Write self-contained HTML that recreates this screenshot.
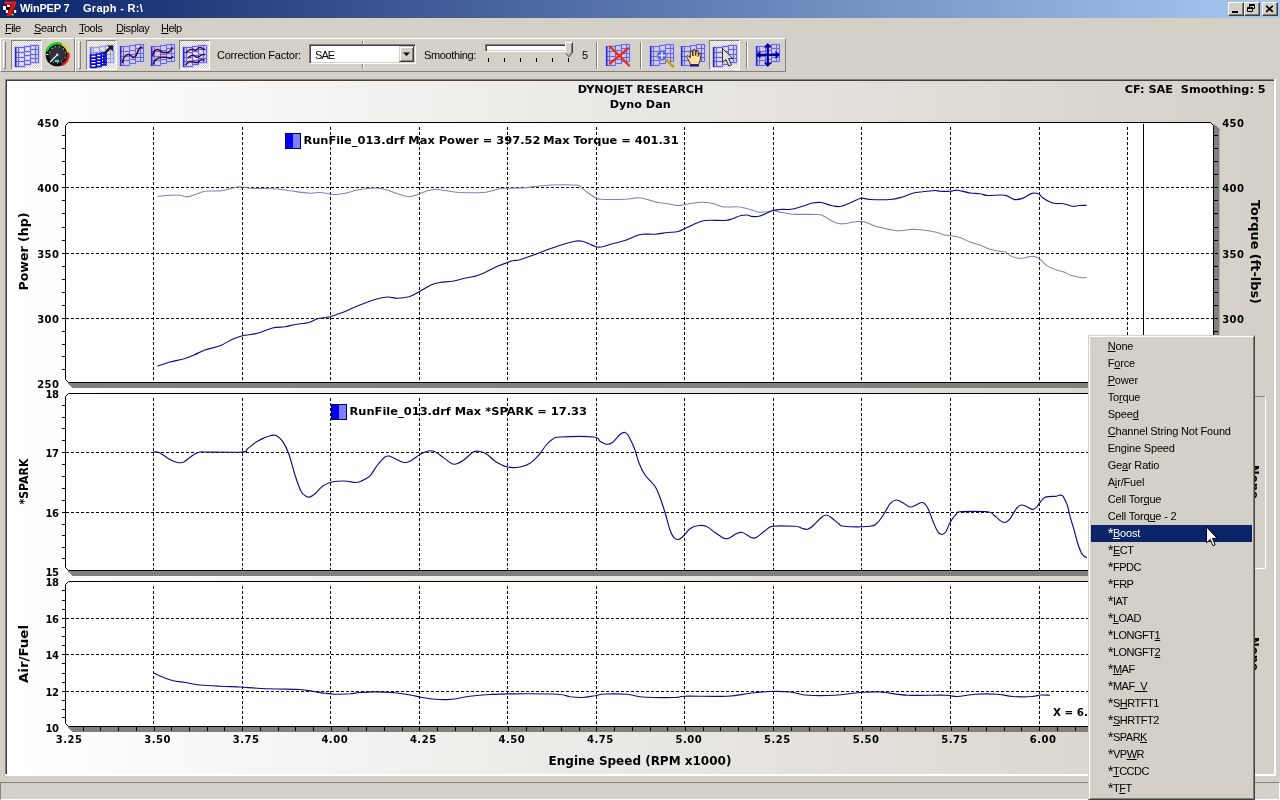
<!DOCTYPE html>
<html><head><meta charset="utf-8"><title>WinPEP 7 Graph</title>
<style>
html,body{margin:0;padding:0}
body{width:1280px;height:800px;overflow:hidden;background:#D4D0C8;position:relative;font-family:"Liberation Sans",sans-serif;font-size:11px;color:#000}
#root{position:absolute;left:0;top:0;width:1280px;height:800px}
.abs{position:absolute}
#g,#menubar span,.lbl,#ctx div,.gs{will-change:transform}
#title{left:0;top:0;width:1280px;height:18px;background:linear-gradient(90deg,#0A246A 0%,#A6CAF0 100%)}
#title span{will-change:transform;position:absolute;top:2px;color:#fff;font-weight:bold;font-size:11px;line-height:13px;white-space:pre}
.cb{position:absolute;top:2px;width:16px;height:14px;background:#D4D0C8;box-sizing:border-box;border:1px solid;border-color:#fff #404040 #404040 #fff;box-shadow:inset -1px -1px 0 #808080}
#menubar span{position:absolute;top:22px;line-height:13px;font-size:11px;white-space:pre}
u{text-decoration:underline;text-decoration-thickness:1px;text-underline-offset:1px}
.tb{position:absolute;top:38px;height:34px;box-sizing:border-box;border:1px solid;border-color:#fff #808080 #808080 #fff}
.grip{position:absolute;top:2px;width:3px;height:28px;box-sizing:border-box;border:1px solid;border-color:#fff #808080 #808080 #fff}
.sep{position:absolute;top:42px;width:2px;height:27px;box-sizing:border-box;border-left:1px solid #808080;border-right:1px solid #fff}
.chk{position:absolute;top:40px;width:31px;height:30px;box-sizing:border-box;border:1px solid;border-color:#808080 #fff #fff #808080;
 background-color:#fff;background-image:linear-gradient(45deg,#D4D0C8 25%,transparent 25%,transparent 75%,#D4D0C8 75%),linear-gradient(45deg,#D4D0C8 25%,transparent 25%,transparent 75%,#D4D0C8 75%);background-size:2px 2px;background-position:0 0,1px 1px}
.lbl{position:absolute;top:49px;line-height:13px;white-space:pre}
#status{left:0;top:782px;width:1280px;height:18px;box-sizing:border-box;border:1px solid;border-color:#808080 #fff #fff #808080}
#ctx{left:1088px;top:335px;width:167px;height:465px;box-sizing:border-box;background:#D4D0C8;border:1px solid;border-color:#D4D0C8 #404040 #404040 #D4D0C8;box-shadow:inset 1px 1px 0 #fff,inset -1px -1px 0 #808080}
#ctx div{position:absolute;left:2px;width:161px;height:17px;line-height:17px;padding-left:16.7px;box-sizing:border-box;white-space:pre;letter-spacing:-0.17px}
#ctx div.sel{background:#0A246A;color:#fff}
#ctx div.st{letter-spacing:-0.5px}
#ctx i{font-style:normal;font-size:15px;line-height:0;position:relative;top:1.4px;letter-spacing:-0.6px}
</style></head>
<body>
<div id="root">
<div id="title" class="abs">
<svg class="abs" style="left:0;top:0" width="20" height="18" viewBox="0 0 20 18"><path d="M2.5 5.5h4v-1.5h4v3h3.5v3h2v3.5h-3v2.5h-3v-2.5h-2.5v-0.5h-3v-3h-2z" fill="#0a0a14"/><rect x="3" y="6" width="3" height="4" fill="#fff"/><rect x="7" y="4.6" width="3" height="2.4" fill="#fff"/><rect x="5.8" y="10" width="2.4" height="3" fill="#fff"/><rect x="14" y="10" width="2.2" height="3" fill="#fff"/><rect x="11.6" y="13.6" width="1.8" height="1.8" fill="#fff"/><path d="M4.2 1.4 H16 V4.4 L10.8 16 H6.3 L11.6 4.6 H4.6 Z" fill="#D81414"/><path d="M5 2.4H15" stroke="#F03020" stroke-width="1"/></svg>
<span style="left:20px;letter-spacing:-0.2px">WinPEP 7</span><span style="left:83px;letter-spacing:0.3px">Graph - R:\</span>
<div class="cb" style="left:1228px"><svg width="14" height="12" style="position:absolute;left:0;top:0"><rect x="3" y="8" width="6" height="2" fill="#000"/></svg></div>
<div class="cb" style="left:1244px"><svg width="14" height="12" style="position:absolute;left:0;top:0"><path d="M4.5 1.5h5v4h-5z M4.5 2.5h5" fill="none" stroke="#000"/><path d="M2.5 4.5h5v4h-5z" fill="#D4D0C8" stroke="#000"/><path d="M2.5 5.5h5" stroke="#000"/></svg></div>
<div class="cb" style="left:1262px"><svg width="14" height="12" style="position:absolute;left:0;top:0"><path d="M3.2 2.8 L9.8 8.8 M9.8 2.8 L3.2 8.8" stroke="#000" stroke-width="1.7"/></svg></div>
</div>
<div id="menubar">
<span style="left:5.4px;letter-spacing:-0.55px"><u>F</u>ile</span>
<span style="left:34.0px;letter-spacing:-0.40px"><u>S</u>earch</span>
<span style="left:79.0px;letter-spacing:-0.50px"><u>T</u>ools</span>
<span style="left:116.0px;letter-spacing:-0.40px"><u>D</u>isplay</span>
<span style="left:161.0px;letter-spacing:-0.50px"><u>H</u>elp</span>
</div>
<div class="tb" style="left:0;width:75px"><div class="grip" style="left:2px"></div></div>
<div class="tb" style="left:75px;width:711px"><div class="grip" style="left:2px"></div></div>
<div class="chk" style="left:11px"></div>
<div class="chk" style="left:86px"></div>
<div class="chk" style="left:179px"></div>
<div class="chk" style="left:709px"></div>
<div class="sep" style="left:596px"></div>
<div class="sep" style="left:640px"></div>
<div class="sep" style="left:746px"></div>
<div class="sep" style="left:362px;top:41px;height:28px"></div>
<span class="lbl" style="left:216.5px;letter-spacing:-0.23px">Correction Factor:</span>
<span class="lbl" style="left:423.5px;letter-spacing:-0.37px">Smoothing:</span>
<span class="lbl" style="left:581.5px">5</span>
<div class="abs" style="left:309px;top:44px;width:107px;height:20px;box-sizing:border-box;background:#fff;border:1px solid;border-color:#808080 #fff #fff #808080;box-shadow:inset 1px 1px 0 #404040,inset -1px -1px 0 #D4D0C8"><span class="abs gs" style="left:5px;top:4px;line-height:13px;letter-spacing:-0.9px">SAE</span><div class="abs" style="left:89px;top:1px;width:15px;height:16px;box-sizing:border-box;background:#D4D0C8;border:1px solid;border-color:#D4D0C8 #404040 #404040 #D4D0C8;box-shadow:inset 1px 1px 0 #fff,inset -1px -1px 0 #808080"><svg width="13" height="14" class="abs" style="left:0;top:0"><path d="M3 5.5h7l-3.5 3.5z" fill="#000"/></svg></div></div>
<div class="abs" style="left:485px;top:44px;width:88px;height:8px;box-sizing:border-box;background:#fff;border:1px solid;border-color:#808080 #fff #fff #808080;box-shadow:inset 1px 1px 0 #404040,inset -1px -1px 0 #D4D0C8"></div>
<svg class="abs" style="left:560px;top:40px" width="20" height="24"><path d="M5.5 2.5 H12.5 V12.5 L9 16.5 L5.5 12.5 Z" fill="#D4D0C8"/><path d="M5.5 12.5 V2.5 H12" fill="none" stroke="#fff"/><path d="M12.5 2.5 V12.5 L9 16.8 L5.5 12.8" fill="none" stroke="#404040"/><path d="M11.5 3.5 V12.2 L9 15.3" fill="none" stroke="#808080"/></svg>
<div class="abs" style="left:488px;top:58px;width:1px;height:4px;background:#000"></div>
<div class="abs" style="left:504px;top:58px;width:1px;height:4px;background:#000"></div>
<div class="abs" style="left:520px;top:58px;width:1px;height:4px;background:#000"></div>
<div class="abs" style="left:536px;top:58px;width:1px;height:4px;background:#000"></div>
<div class="abs" style="left:552px;top:58px;width:1px;height:4px;background:#000"></div>
<div class="abs" style="left:568px;top:58px;width:1px;height:4px;background:#000"></div>
<svg class="abs" style="left:0;top:38px" width="800" height="36" viewBox="0 38 800 36">
<defs><symbol id="gr" viewBox="0 0 25 24" overflow="visible">
<path d="M0.5 2.5H3.5V21.5H0.5ZM0.5 7.5H3.5M0.5 12.5H3.5M0.5 16.5H3.5M3.5 2.5H9.5V21.5H3.5ZM3.5 7.5H9.5M3.5 12.5H9.5M3.5 16.5H9.5M9.5 1.5H15.5V19.5H9.5ZM9.5 6.5H15.5M9.5 10.5H15.5M9.5 15.5H15.5M15.5 0.5H20.5V17.5H15.5ZM15.5 4.5H20.5M15.5 9.5H20.5M15.5 13.5H20.5M20.5 0.5H23.5V17.5H20.5ZM20.5 4.5H23.5M20.5 9.5H23.5M20.5 13.5H23.5" fill="none" stroke="#C6C6FC" stroke-width="2.8" stroke-linejoin="round" opacity=".85"/>
<path d="M0.5 2.5H3.5V21.5H0.5ZM0.5 7.5H3.5M0.5 12.5H3.5M0.5 16.5H3.5M3.5 2.5H9.5V21.5H3.5ZM3.5 7.5H9.5M3.5 12.5H9.5M3.5 16.5H9.5M9.5 1.5H15.5V19.5H9.5ZM9.5 6.5H15.5M9.5 10.5H15.5M9.5 15.5H15.5M15.5 0.5H20.5V17.5H15.5ZM15.5 4.5H20.5M15.5 9.5H20.5M15.5 13.5H20.5M20.5 0.5H23.5V17.5H20.5ZM20.5 4.5H23.5M20.5 9.5H23.5M20.5 13.5H23.5" fill="none" stroke="#6666E4" stroke-width="1"/>
<line x1="0.7" x2="0.7" y1="2.2" y2="22" stroke="#2626CC" stroke-width="1.6"/>
</symbol></defs>
<use href="#gr" x="15.0" y="45.0" width="25" height="24"/>
<circle cx="57.2" cy="54.7" r="11.6" fill="#0c0c10"/>
<circle cx="57.6" cy="54.4" r="8.6" fill="#30303c"/>
<path d="M46.6 51 A11.2 11.2 0 0 1 61.5 44.2" fill="none" stroke="#18D418" stroke-width="2.4"/>
<path d="M61.5 44.2 A11.2 11.2 0 0 1 68.2 52.5" fill="none" stroke="#E6DC20" stroke-width="2.2"/>
<path d="M68.4 53.5 A11.2 11.2 0 0 1 62.2 64.8" fill="none" stroke="#E01C0C" stroke-width="2.6"/>
<circle cx="49.6" cy="52.0" r=".55" fill="#e8e8f0"/>
<circle cx="52.1" cy="48.4" r=".55" fill="#e8e8f0"/>
<circle cx="55.3" cy="46.8" r=".55" fill="#e8e8f0"/>
<circle cx="59.5" cy="46.8" r=".55" fill="#e8e8f0"/>
<circle cx="63.3" cy="48.9" r=".55" fill="#e8e8f0"/>
<circle cx="65.4" cy="52.7" r=".55" fill="#e8e8f0"/>
<circle cx="65.2" cy="57.6" r=".55" fill="#e8e8f0"/>
<circle cx="61.5" cy="62.0" r=".55" fill="#e8e8f0"/>
<circle cx="57.4" cy="63.1" r=".55" fill="#e8e8f0"/>
<circle cx="53.2" cy="62.0" r=".55" fill="#e8e8f0"/>
<rect x="46" y="54" width="2.6" height="1" fill="#d8d8d8"/>
<line x1="57.2" y1="54.8" x2="50.2" y2="62" stroke="#fff" stroke-width="1.1"/>
<circle cx="57.2" cy="54.7" r="1.2" fill="#f0d8d8"/>
<rect x="55" y="59.9" width="4" height="2.1" fill="#28E8C8"/>
<g opacity=".6">
<use href="#gr" x="90.0" y="45.0" width="25" height="24"/>
</g>
<path d="M90.6 55.0H96.3V67.3H90.6ZM90.6 58.1H96.3M90.6 61.1H96.3M90.6 64.2H96.3M96.3 54.0H101.2V66.3H96.3ZM96.3 57.1H101.2M96.3 60.1H101.2M96.3 63.2H101.2M101.2 53.2H106.0V64.8H101.2ZM101.2 56.1H106.0M101.2 59.0H106.0M101.2 61.9H106.0M104.0 53.2V64.8" fill="#fff" stroke="#0A0AD4" stroke-width="1.7"/>
<path d="M104.5 53.5 L110.5 47.5" stroke="#181818" stroke-width="2.4"/><path d="M107 45.6 H113 V51.6 Z" fill="#202024"/>
<use href="#gr" x="120.0" y="44.0" width="25" height="24"/>
<path d="M122.5 63 C123 57 126 54.5 128.5 54.5 S132 58 134 57.5 S137 54 138 51 S140.5 47.2 142.5 47.2" fill="none" stroke="#380038" stroke-width="1.6"/>
<use href="#gr" x="151.0" y="44.0" width="25" height="24"/>
<path d="M152.6 56 C153.5 51 156 49.3 158 49.5 S160.5 52.3 163 52.5 H167 C169.5 52.3 171 50.5 172.6 47.3" fill="none" stroke="#400030" stroke-width="1.5"/>
<path d="M153 64.5 C154 61 157 58 161 57.2 H166 C168 57.5 170 59 171 58.2 L172.8 56.3" fill="none" stroke="#400030" stroke-width="1.5"/>
<use href="#gr" x="183.0" y="45.0" width="25" height="24"/>
<path d="M185.5 53 L188 51 L190 49.6 L193 49.2 L195 50.4 L197 49.5 L199 47.6 L201 47.5 L203 49 L205 49.5" fill="none" stroke="#3C0040" stroke-width="1.4" stroke-linejoin="round"/>
<path d="M188 58.2 L190 56.2 L193 55.2 L196 57 L198 57.4 L200 56 L202 54.6 L205 54.5" fill="none" stroke="#3C0040" stroke-width="1.4" stroke-linejoin="round"/>
<path d="M185.5 65 L187 63.5 L189 62 L192 61.5 L195 62.5 L198 62.5 L200 60.2 L203 59.6 L204.6 60.6" fill="none" stroke="#3C0040" stroke-width="1.4" stroke-linejoin="round"/>
<use href="#gr" x="606.0" y="44.0" width="25" height="24"/>
<path d="M610 46.5 L629 65.5 M628 48.5 L610 63.5" stroke="#E83018" stroke-width="2.4" stroke-linecap="round"/>
<use href="#gr" x="650.0" y="44.0" width="25" height="24"/>
<circle cx="662" cy="55.5" r="5" fill="#5060E8" stroke="#9098C8" stroke-width="1"/><path d="M662 52v7M658.5 55.5h7" stroke="#e8e8ff" stroke-width="1.6"/>
<path d="M666.5 60 L673 66.5" stroke="#C8A010" stroke-width="2.6" stroke-linecap="round"/>
<use href="#gr" x="681.0" y="44.0" width="25" height="24"/>
<path d="M690 66.5 h9 v-2 h-9z" fill="#1010B0"/>
<path d="M690.5 64.5 L688 59 L686.5 56.5 L688 55.5 L690.3 58 V51.5 L692 50.8 L693 56 V49.8 L695 49.5 L695.6 55.5 L696.4 50.5 L698.2 50.8 L698.2 56.5 L699.6 53 L701.2 53.6 L700.2 60 L698.6 64.5 Z" fill="#FFE0A0" stroke="#302010" stroke-width=".9"/>
<use href="#gr" x="713.0" y="45.0" width="25" height="24"/>
<path d="M722.5 48.5 V62.5 L726 59.5 L728.8 66 L731.5 64.8 L728.6 58.6 H733 Z" fill="#E0E0E0" stroke="#303030" stroke-width="1"/>
<use href="#gr" x="756.0" y="44.0" width="25" height="24"/>
<path d="M759 54.8 H777 M767.8 46 V64" stroke="#000098" stroke-width="2.2"/>
<path d="M756 54.8 l4.5 -4 v8z M780 54.8 l-4.5 -4 v8z M767.8 43 l-4 4.5 h8z M767.8 67 l-4 -4.5 h8z" fill="#000098"/>
</svg>
<svg id="g" width="1280" height="800" viewBox="0 0 1280 800" style="position:absolute;left:0;top:0" font-family="'DejaVu Sans','Liberation Sans',sans-serif" font-weight="bold" fill="#000">
<defs><linearGradient id="pg" x1="0" x2="1" y1="0" y2="0"><stop offset="0" stop-color="#fff"/><stop offset="1" stop-color="#D4D0C8"/></linearGradient></defs>
<rect x="5" y="79" width="1271" height="697" fill="#fff"/>
<rect x="5" y="79" width="1269" height="695" fill="#808080"/>
<rect x="6" y="80" width="1268" height="694" fill="#404040"/>
<rect x="7" y="81" width="1267" height="693" fill="url(#pg)"/>
<text x="577.7" y="92.8" font-size="11" text-anchor="start" textLength="125.7" lengthAdjust="spacingAndGlyphs">DYNOJET RESEARCH</text>
<text x="609.7" y="107.8" font-size="11" text-anchor="start" textLength="61.0" lengthAdjust="spacingAndGlyphs">Dyno Dan</text>
<text x="1124.7" y="92.7" font-size="11" text-anchor="start" textLength="141.0" lengthAdjust="spacingAndGlyphs" xml:space="preserve">CF: SAE&#160; Smoothing: 5</text>
<path d="M67.5 383.0 H1214 V124.0 L1219.5 128.5 V388.0 H72.5 Z" fill="#808080"/>
<path d="M68.5 122.5 H1210.5 L1213.5 125.5 V382.5 L1213.5 382.5 H68.5 L65.5 379.5 V125.5 Z" fill="#fff" stroke="#000" stroke-width="1"/>
<line x1="66" x2="1213" y1="187.5" y2="187.5" stroke="#000" stroke-dasharray="3 2" shape-rendering="crispEdges"/>
<line x1="66" x2="1213" y1="253.5" y2="253.5" stroke="#000" stroke-dasharray="3 2" shape-rendering="crispEdges"/>
<line x1="66" x2="1213" y1="318.5" y2="318.5" stroke="#000" stroke-dasharray="3 2" shape-rendering="crispEdges"/>
<line x1="153.5" x2="153.5" y1="126.5" y2="381.5" stroke="#000" stroke-dasharray="3 2" shape-rendering="crispEdges"/>
<line x1="242.1" x2="242.1" y1="126.5" y2="381.5" stroke="#000" stroke-dasharray="3 2" shape-rendering="crispEdges"/>
<line x1="330.6" x2="330.6" y1="126.5" y2="381.5" stroke="#000" stroke-dasharray="3 2" shape-rendering="crispEdges"/>
<line x1="419.2" x2="419.2" y1="126.5" y2="381.5" stroke="#000" stroke-dasharray="3 2" shape-rendering="crispEdges"/>
<line x1="507.7" x2="507.7" y1="126.5" y2="381.5" stroke="#000" stroke-dasharray="3 2" shape-rendering="crispEdges"/>
<line x1="596.3" x2="596.3" y1="126.5" y2="381.5" stroke="#000" stroke-dasharray="3 2" shape-rendering="crispEdges"/>
<line x1="684.8" x2="684.8" y1="126.5" y2="381.5" stroke="#000" stroke-dasharray="3 2" shape-rendering="crispEdges"/>
<line x1="773.4" x2="773.4" y1="126.5" y2="381.5" stroke="#000" stroke-dasharray="3 2" shape-rendering="crispEdges"/>
<line x1="861.9" x2="861.9" y1="126.5" y2="381.5" stroke="#000" stroke-dasharray="3 2" shape-rendering="crispEdges"/>
<line x1="950.5" x2="950.5" y1="126.5" y2="381.5" stroke="#000" stroke-dasharray="3 2" shape-rendering="crispEdges"/>
<line x1="1039.1" x2="1039.1" y1="126.5" y2="381.5" stroke="#000" stroke-dasharray="3 2" shape-rendering="crispEdges"/>
<line x1="1127.6" x2="1127.6" y1="126.5" y2="381.5" stroke="#000" stroke-dasharray="3 2" shape-rendering="crispEdges"/>
<line x1="1143.5" x2="1143.5" y1="123.5" y2="382.5" stroke="#000" shape-rendering="crispEdges"/>
<line x1="62" x2="65" y1="135.5" y2="135.5" stroke="#000" shape-rendering="crispEdges"/>
<line x1="1214" x2="1218" y1="135.5" y2="135.5" stroke="#000" shape-rendering="crispEdges"/>
<line x1="62" x2="65" y1="148.5" y2="148.5" stroke="#000" shape-rendering="crispEdges"/>
<line x1="1214" x2="1218" y1="148.5" y2="148.5" stroke="#000" shape-rendering="crispEdges"/>
<line x1="62" x2="65" y1="161.5" y2="161.5" stroke="#000" shape-rendering="crispEdges"/>
<line x1="1214" x2="1218" y1="161.5" y2="161.5" stroke="#000" shape-rendering="crispEdges"/>
<line x1="62" x2="65" y1="174.5" y2="174.5" stroke="#000" shape-rendering="crispEdges"/>
<line x1="1214" x2="1218" y1="174.5" y2="174.5" stroke="#000" shape-rendering="crispEdges"/>
<line x1="62" x2="65" y1="187.5" y2="187.5" stroke="#000" shape-rendering="crispEdges"/>
<line x1="1214" x2="1218" y1="187.5" y2="187.5" stroke="#000" shape-rendering="crispEdges"/>
<line x1="62" x2="65" y1="200.7" y2="200.7" stroke="#000" shape-rendering="crispEdges"/>
<line x1="1214" x2="1218" y1="200.7" y2="200.7" stroke="#000" shape-rendering="crispEdges"/>
<line x1="62" x2="65" y1="213.9" y2="213.9" stroke="#000" shape-rendering="crispEdges"/>
<line x1="1214" x2="1218" y1="213.9" y2="213.9" stroke="#000" shape-rendering="crispEdges"/>
<line x1="62" x2="65" y1="227.1" y2="227.1" stroke="#000" shape-rendering="crispEdges"/>
<line x1="1214" x2="1218" y1="227.1" y2="227.1" stroke="#000" shape-rendering="crispEdges"/>
<line x1="62" x2="65" y1="240.3" y2="240.3" stroke="#000" shape-rendering="crispEdges"/>
<line x1="1214" x2="1218" y1="240.3" y2="240.3" stroke="#000" shape-rendering="crispEdges"/>
<line x1="62" x2="65" y1="253.5" y2="253.5" stroke="#000" shape-rendering="crispEdges"/>
<line x1="1214" x2="1218" y1="253.5" y2="253.5" stroke="#000" shape-rendering="crispEdges"/>
<line x1="62" x2="65" y1="266.5" y2="266.5" stroke="#000" shape-rendering="crispEdges"/>
<line x1="1214" x2="1218" y1="266.5" y2="266.5" stroke="#000" shape-rendering="crispEdges"/>
<line x1="62" x2="65" y1="279.5" y2="279.5" stroke="#000" shape-rendering="crispEdges"/>
<line x1="1214" x2="1218" y1="279.5" y2="279.5" stroke="#000" shape-rendering="crispEdges"/>
<line x1="62" x2="65" y1="292.5" y2="292.5" stroke="#000" shape-rendering="crispEdges"/>
<line x1="1214" x2="1218" y1="292.5" y2="292.5" stroke="#000" shape-rendering="crispEdges"/>
<line x1="62" x2="65" y1="305.5" y2="305.5" stroke="#000" shape-rendering="crispEdges"/>
<line x1="1214" x2="1218" y1="305.5" y2="305.5" stroke="#000" shape-rendering="crispEdges"/>
<line x1="62" x2="65" y1="318.5" y2="318.5" stroke="#000" shape-rendering="crispEdges"/>
<line x1="1214" x2="1218" y1="318.5" y2="318.5" stroke="#000" shape-rendering="crispEdges"/>
<line x1="62" x2="65" y1="331.3" y2="331.3" stroke="#000" shape-rendering="crispEdges"/>
<line x1="1214" x2="1218" y1="331.3" y2="331.3" stroke="#000" shape-rendering="crispEdges"/>
<line x1="62" x2="65" y1="344.1" y2="344.1" stroke="#000" shape-rendering="crispEdges"/>
<line x1="1214" x2="1218" y1="344.1" y2="344.1" stroke="#000" shape-rendering="crispEdges"/>
<line x1="62" x2="65" y1="356.9" y2="356.9" stroke="#000" shape-rendering="crispEdges"/>
<line x1="1214" x2="1218" y1="356.9" y2="356.9" stroke="#000" shape-rendering="crispEdges"/>
<line x1="62" x2="65" y1="369.7" y2="369.7" stroke="#000" shape-rendering="crispEdges"/>
<line x1="1214" x2="1218" y1="369.7" y2="369.7" stroke="#000" shape-rendering="crispEdges"/>
<text x="37.3" y="127.4" font-size="10" textLength="21.6" lengthAdjust="spacing">450</text>
<text x="37.3" y="191.9" font-size="10" textLength="21.6" lengthAdjust="spacing">400</text>
<text x="37.3" y="257.9" font-size="10" textLength="21.6" lengthAdjust="spacing">350</text>
<text x="37.3" y="322.9" font-size="10" textLength="21.6" lengthAdjust="spacing">300</text>
<text x="37.3" y="388.4" font-size="10" textLength="21.6" lengthAdjust="spacing">250</text>
<text x="1222.3" y="127.4" font-size="10" textLength="21.6" lengthAdjust="spacing">450</text>
<text x="1222.3" y="191.9" font-size="10" textLength="21.6" lengthAdjust="spacing">400</text>
<text x="1222.3" y="257.9" font-size="10" textLength="21.6" lengthAdjust="spacing">350</text>
<text x="1222.3" y="322.9" font-size="10" textLength="21.6" lengthAdjust="spacing">300</text>
<path d="M67.5 571.0 H1214 V395.0 L1219.5 399.5 V576.0 H72.5 Z" fill="#808080"/>
<path d="M68.5 393.5 H1210.5 L1213.5 396.5 V570.5 L1213.5 570.5 H68.5 L65.5 567.5 V396.5 Z" fill="#fff" stroke="#000" stroke-width="1"/>
<line x1="66" x2="1213" y1="452.5" y2="452.5" stroke="#000" stroke-dasharray="3 2" shape-rendering="crispEdges"/>
<line x1="66" x2="1213" y1="512.5" y2="512.5" stroke="#000" stroke-dasharray="3 2" shape-rendering="crispEdges"/>
<line x1="153.5" x2="153.5" y1="397.5" y2="569.5" stroke="#000" stroke-dasharray="3 2" shape-rendering="crispEdges"/>
<line x1="242.1" x2="242.1" y1="397.5" y2="569.5" stroke="#000" stroke-dasharray="3 2" shape-rendering="crispEdges"/>
<line x1="330.6" x2="330.6" y1="397.5" y2="569.5" stroke="#000" stroke-dasharray="3 2" shape-rendering="crispEdges"/>
<line x1="419.2" x2="419.2" y1="397.5" y2="569.5" stroke="#000" stroke-dasharray="3 2" shape-rendering="crispEdges"/>
<line x1="507.7" x2="507.7" y1="397.5" y2="569.5" stroke="#000" stroke-dasharray="3 2" shape-rendering="crispEdges"/>
<line x1="596.3" x2="596.3" y1="397.5" y2="569.5" stroke="#000" stroke-dasharray="3 2" shape-rendering="crispEdges"/>
<line x1="684.8" x2="684.8" y1="397.5" y2="569.5" stroke="#000" stroke-dasharray="3 2" shape-rendering="crispEdges"/>
<line x1="773.4" x2="773.4" y1="397.5" y2="569.5" stroke="#000" stroke-dasharray="3 2" shape-rendering="crispEdges"/>
<line x1="861.9" x2="861.9" y1="397.5" y2="569.5" stroke="#000" stroke-dasharray="3 2" shape-rendering="crispEdges"/>
<line x1="950.5" x2="950.5" y1="397.5" y2="569.5" stroke="#000" stroke-dasharray="3 2" shape-rendering="crispEdges"/>
<line x1="1039.1" x2="1039.1" y1="397.5" y2="569.5" stroke="#000" stroke-dasharray="3 2" shape-rendering="crispEdges"/>
<line x1="1127.6" x2="1127.6" y1="397.5" y2="569.5" stroke="#000" stroke-dasharray="3 2" shape-rendering="crispEdges"/>
<line x1="1143.5" x2="1143.5" y1="394.5" y2="570.5" stroke="#000" shape-rendering="crispEdges"/>
<line x1="62" x2="65" y1="405.3" y2="405.3" stroke="#000" shape-rendering="crispEdges"/>
<line x1="1214" x2="1218" y1="405.3" y2="405.3" stroke="#000" shape-rendering="crispEdges"/>
<line x1="62" x2="65" y1="417.1" y2="417.1" stroke="#000" shape-rendering="crispEdges"/>
<line x1="1214" x2="1218" y1="417.1" y2="417.1" stroke="#000" shape-rendering="crispEdges"/>
<line x1="62" x2="65" y1="428.9" y2="428.9" stroke="#000" shape-rendering="crispEdges"/>
<line x1="1214" x2="1218" y1="428.9" y2="428.9" stroke="#000" shape-rendering="crispEdges"/>
<line x1="62" x2="65" y1="440.7" y2="440.7" stroke="#000" shape-rendering="crispEdges"/>
<line x1="1214" x2="1218" y1="440.7" y2="440.7" stroke="#000" shape-rendering="crispEdges"/>
<line x1="62" x2="65" y1="452.5" y2="452.5" stroke="#000" shape-rendering="crispEdges"/>
<line x1="1214" x2="1218" y1="452.5" y2="452.5" stroke="#000" shape-rendering="crispEdges"/>
<line x1="62" x2="65" y1="464.5" y2="464.5" stroke="#000" shape-rendering="crispEdges"/>
<line x1="1214" x2="1218" y1="464.5" y2="464.5" stroke="#000" shape-rendering="crispEdges"/>
<line x1="62" x2="65" y1="476.5" y2="476.5" stroke="#000" shape-rendering="crispEdges"/>
<line x1="1214" x2="1218" y1="476.5" y2="476.5" stroke="#000" shape-rendering="crispEdges"/>
<line x1="62" x2="65" y1="488.5" y2="488.5" stroke="#000" shape-rendering="crispEdges"/>
<line x1="1214" x2="1218" y1="488.5" y2="488.5" stroke="#000" shape-rendering="crispEdges"/>
<line x1="62" x2="65" y1="500.5" y2="500.5" stroke="#000" shape-rendering="crispEdges"/>
<line x1="1214" x2="1218" y1="500.5" y2="500.5" stroke="#000" shape-rendering="crispEdges"/>
<line x1="62" x2="65" y1="512.5" y2="512.5" stroke="#000" shape-rendering="crispEdges"/>
<line x1="1214" x2="1218" y1="512.5" y2="512.5" stroke="#000" shape-rendering="crispEdges"/>
<line x1="62" x2="65" y1="524.1" y2="524.1" stroke="#000" shape-rendering="crispEdges"/>
<line x1="1214" x2="1218" y1="524.1" y2="524.1" stroke="#000" shape-rendering="crispEdges"/>
<line x1="62" x2="65" y1="535.7" y2="535.7" stroke="#000" shape-rendering="crispEdges"/>
<line x1="1214" x2="1218" y1="535.7" y2="535.7" stroke="#000" shape-rendering="crispEdges"/>
<line x1="62" x2="65" y1="547.3" y2="547.3" stroke="#000" shape-rendering="crispEdges"/>
<line x1="1214" x2="1218" y1="547.3" y2="547.3" stroke="#000" shape-rendering="crispEdges"/>
<line x1="62" x2="65" y1="558.9" y2="558.9" stroke="#000" shape-rendering="crispEdges"/>
<line x1="1214" x2="1218" y1="558.9" y2="558.9" stroke="#000" shape-rendering="crispEdges"/>
<text x="45.5" y="398.2" font-size="10" textLength="13.4" lengthAdjust="spacing">18</text>
<text x="45.5" y="456.9" font-size="10" textLength="13.4" lengthAdjust="spacing">17</text>
<text x="45.5" y="516.9" font-size="10" textLength="13.4" lengthAdjust="spacing">16</text>
<text x="45.5" y="576.4" font-size="10" textLength="13.4" lengthAdjust="spacing">15</text>
<path d="M67.5 727.0 H1214 V583.0 L1219.5 587.5 V732.0 H72.5 Z" fill="#808080"/>
<path d="M68.5 581.5 H1210.5 L1213.5 584.5 V726.5 L1213.5 726.5 H68.5 L65.5 723.5 V584.5 Z" fill="#fff" stroke="#000" stroke-width="1"/>
<line x1="66" x2="1213" y1="618.5" y2="618.5" stroke="#000" stroke-dasharray="3 2" shape-rendering="crispEdges"/>
<line x1="66" x2="1213" y1="654.5" y2="654.5" stroke="#000" stroke-dasharray="3 2" shape-rendering="crispEdges"/>
<line x1="66" x2="1213" y1="691.5" y2="691.5" stroke="#000" stroke-dasharray="3 2" shape-rendering="crispEdges"/>
<line x1="153.5" x2="153.5" y1="585.5" y2="725.5" stroke="#000" stroke-dasharray="3 2" shape-rendering="crispEdges"/>
<line x1="242.1" x2="242.1" y1="585.5" y2="725.5" stroke="#000" stroke-dasharray="3 2" shape-rendering="crispEdges"/>
<line x1="330.6" x2="330.6" y1="585.5" y2="725.5" stroke="#000" stroke-dasharray="3 2" shape-rendering="crispEdges"/>
<line x1="419.2" x2="419.2" y1="585.5" y2="725.5" stroke="#000" stroke-dasharray="3 2" shape-rendering="crispEdges"/>
<line x1="507.7" x2="507.7" y1="585.5" y2="725.5" stroke="#000" stroke-dasharray="3 2" shape-rendering="crispEdges"/>
<line x1="596.3" x2="596.3" y1="585.5" y2="725.5" stroke="#000" stroke-dasharray="3 2" shape-rendering="crispEdges"/>
<line x1="684.8" x2="684.8" y1="585.5" y2="725.5" stroke="#000" stroke-dasharray="3 2" shape-rendering="crispEdges"/>
<line x1="773.4" x2="773.4" y1="585.5" y2="725.5" stroke="#000" stroke-dasharray="3 2" shape-rendering="crispEdges"/>
<line x1="861.9" x2="861.9" y1="585.5" y2="725.5" stroke="#000" stroke-dasharray="3 2" shape-rendering="crispEdges"/>
<line x1="950.5" x2="950.5" y1="585.5" y2="725.5" stroke="#000" stroke-dasharray="3 2" shape-rendering="crispEdges"/>
<line x1="1039.1" x2="1039.1" y1="585.5" y2="725.5" stroke="#000" stroke-dasharray="3 2" shape-rendering="crispEdges"/>
<line x1="1127.6" x2="1127.6" y1="585.5" y2="725.5" stroke="#000" stroke-dasharray="3 2" shape-rendering="crispEdges"/>
<line x1="1143.5" x2="1143.5" y1="582.5" y2="726.5" stroke="#000" shape-rendering="crispEdges"/>
<line x1="62" x2="65" y1="590.8" y2="590.8" stroke="#000" shape-rendering="crispEdges"/>
<line x1="1214" x2="1218" y1="590.8" y2="590.8" stroke="#000" shape-rendering="crispEdges"/>
<line x1="62" x2="65" y1="600.0" y2="600.0" stroke="#000" shape-rendering="crispEdges"/>
<line x1="1214" x2="1218" y1="600.0" y2="600.0" stroke="#000" shape-rendering="crispEdges"/>
<line x1="62" x2="65" y1="609.2" y2="609.2" stroke="#000" shape-rendering="crispEdges"/>
<line x1="1214" x2="1218" y1="609.2" y2="609.2" stroke="#000" shape-rendering="crispEdges"/>
<line x1="62" x2="65" y1="618.5" y2="618.5" stroke="#000" shape-rendering="crispEdges"/>
<line x1="1214" x2="1218" y1="618.5" y2="618.5" stroke="#000" shape-rendering="crispEdges"/>
<line x1="62" x2="65" y1="627.5" y2="627.5" stroke="#000" shape-rendering="crispEdges"/>
<line x1="1214" x2="1218" y1="627.5" y2="627.5" stroke="#000" shape-rendering="crispEdges"/>
<line x1="62" x2="65" y1="636.5" y2="636.5" stroke="#000" shape-rendering="crispEdges"/>
<line x1="1214" x2="1218" y1="636.5" y2="636.5" stroke="#000" shape-rendering="crispEdges"/>
<line x1="62" x2="65" y1="645.5" y2="645.5" stroke="#000" shape-rendering="crispEdges"/>
<line x1="1214" x2="1218" y1="645.5" y2="645.5" stroke="#000" shape-rendering="crispEdges"/>
<line x1="62" x2="65" y1="654.5" y2="654.5" stroke="#000" shape-rendering="crispEdges"/>
<line x1="1214" x2="1218" y1="654.5" y2="654.5" stroke="#000" shape-rendering="crispEdges"/>
<line x1="62" x2="65" y1="663.8" y2="663.8" stroke="#000" shape-rendering="crispEdges"/>
<line x1="1214" x2="1218" y1="663.8" y2="663.8" stroke="#000" shape-rendering="crispEdges"/>
<line x1="62" x2="65" y1="673.0" y2="673.0" stroke="#000" shape-rendering="crispEdges"/>
<line x1="1214" x2="1218" y1="673.0" y2="673.0" stroke="#000" shape-rendering="crispEdges"/>
<line x1="62" x2="65" y1="682.2" y2="682.2" stroke="#000" shape-rendering="crispEdges"/>
<line x1="1214" x2="1218" y1="682.2" y2="682.2" stroke="#000" shape-rendering="crispEdges"/>
<line x1="62" x2="65" y1="691.5" y2="691.5" stroke="#000" shape-rendering="crispEdges"/>
<line x1="1214" x2="1218" y1="691.5" y2="691.5" stroke="#000" shape-rendering="crispEdges"/>
<line x1="62" x2="65" y1="700.2" y2="700.2" stroke="#000" shape-rendering="crispEdges"/>
<line x1="1214" x2="1218" y1="700.2" y2="700.2" stroke="#000" shape-rendering="crispEdges"/>
<line x1="62" x2="65" y1="709.0" y2="709.0" stroke="#000" shape-rendering="crispEdges"/>
<line x1="1214" x2="1218" y1="709.0" y2="709.0" stroke="#000" shape-rendering="crispEdges"/>
<line x1="62" x2="65" y1="717.8" y2="717.8" stroke="#000" shape-rendering="crispEdges"/>
<line x1="1214" x2="1218" y1="717.8" y2="717.8" stroke="#000" shape-rendering="crispEdges"/>
<text x="45.5" y="586.4" font-size="10" textLength="13.4" lengthAdjust="spacing">18</text>
<text x="45.5" y="622.9" font-size="10" textLength="13.4" lengthAdjust="spacing">16</text>
<text x="45.5" y="658.9" font-size="10" textLength="13.4" lengthAdjust="spacing">14</text>
<text x="45.5" y="695.9" font-size="10" textLength="13.4" lengthAdjust="spacing">12</text>
<text x="45.5" y="731.9" font-size="10" textLength="13.4" lengthAdjust="spacing">10</text>
<line x1="83.2" x2="83.2" y1="726.5" y2="730.5" stroke="#000" shape-rendering="crispEdges"/>
<line x1="100.9" x2="100.9" y1="726.5" y2="730.5" stroke="#000" shape-rendering="crispEdges"/>
<line x1="118.6" x2="118.6" y1="726.5" y2="730.5" stroke="#000" shape-rendering="crispEdges"/>
<line x1="136.3" x2="136.3" y1="726.5" y2="730.5" stroke="#000" shape-rendering="crispEdges"/>
<line x1="154.1" x2="154.1" y1="726.5" y2="730.5" stroke="#000" shape-rendering="crispEdges"/>
<line x1="171.8" x2="171.8" y1="726.5" y2="730.5" stroke="#000" shape-rendering="crispEdges"/>
<line x1="189.5" x2="189.5" y1="726.5" y2="730.5" stroke="#000" shape-rendering="crispEdges"/>
<line x1="207.2" x2="207.2" y1="726.5" y2="730.5" stroke="#000" shape-rendering="crispEdges"/>
<line x1="224.9" x2="224.9" y1="726.5" y2="730.5" stroke="#000" shape-rendering="crispEdges"/>
<line x1="242.6" x2="242.6" y1="726.5" y2="730.5" stroke="#000" shape-rendering="crispEdges"/>
<line x1="260.3" x2="260.3" y1="726.5" y2="730.5" stroke="#000" shape-rendering="crispEdges"/>
<line x1="278.0" x2="278.0" y1="726.5" y2="730.5" stroke="#000" shape-rendering="crispEdges"/>
<line x1="295.7" x2="295.7" y1="726.5" y2="730.5" stroke="#000" shape-rendering="crispEdges"/>
<line x1="313.5" x2="313.5" y1="726.5" y2="730.5" stroke="#000" shape-rendering="crispEdges"/>
<line x1="331.2" x2="331.2" y1="726.5" y2="730.5" stroke="#000" shape-rendering="crispEdges"/>
<line x1="348.9" x2="348.9" y1="726.5" y2="730.5" stroke="#000" shape-rendering="crispEdges"/>
<line x1="366.6" x2="366.6" y1="726.5" y2="730.5" stroke="#000" shape-rendering="crispEdges"/>
<line x1="384.3" x2="384.3" y1="726.5" y2="730.5" stroke="#000" shape-rendering="crispEdges"/>
<line x1="402.0" x2="402.0" y1="726.5" y2="730.5" stroke="#000" shape-rendering="crispEdges"/>
<line x1="419.7" x2="419.7" y1="726.5" y2="730.5" stroke="#000" shape-rendering="crispEdges"/>
<line x1="437.4" x2="437.4" y1="726.5" y2="730.5" stroke="#000" shape-rendering="crispEdges"/>
<line x1="455.1" x2="455.1" y1="726.5" y2="730.5" stroke="#000" shape-rendering="crispEdges"/>
<line x1="472.9" x2="472.9" y1="726.5" y2="730.5" stroke="#000" shape-rendering="crispEdges"/>
<line x1="490.6" x2="490.6" y1="726.5" y2="730.5" stroke="#000" shape-rendering="crispEdges"/>
<line x1="508.3" x2="508.3" y1="726.5" y2="730.5" stroke="#000" shape-rendering="crispEdges"/>
<line x1="526.0" x2="526.0" y1="726.5" y2="730.5" stroke="#000" shape-rendering="crispEdges"/>
<line x1="543.7" x2="543.7" y1="726.5" y2="730.5" stroke="#000" shape-rendering="crispEdges"/>
<line x1="561.4" x2="561.4" y1="726.5" y2="730.5" stroke="#000" shape-rendering="crispEdges"/>
<line x1="579.1" x2="579.1" y1="726.5" y2="730.5" stroke="#000" shape-rendering="crispEdges"/>
<line x1="596.8" x2="596.8" y1="726.5" y2="730.5" stroke="#000" shape-rendering="crispEdges"/>
<line x1="614.5" x2="614.5" y1="726.5" y2="730.5" stroke="#000" shape-rendering="crispEdges"/>
<line x1="632.3" x2="632.3" y1="726.5" y2="730.5" stroke="#000" shape-rendering="crispEdges"/>
<line x1="650.0" x2="650.0" y1="726.5" y2="730.5" stroke="#000" shape-rendering="crispEdges"/>
<line x1="667.7" x2="667.7" y1="726.5" y2="730.5" stroke="#000" shape-rendering="crispEdges"/>
<line x1="685.4" x2="685.4" y1="726.5" y2="730.5" stroke="#000" shape-rendering="crispEdges"/>
<line x1="703.1" x2="703.1" y1="726.5" y2="730.5" stroke="#000" shape-rendering="crispEdges"/>
<line x1="720.8" x2="720.8" y1="726.5" y2="730.5" stroke="#000" shape-rendering="crispEdges"/>
<line x1="738.5" x2="738.5" y1="726.5" y2="730.5" stroke="#000" shape-rendering="crispEdges"/>
<line x1="756.2" x2="756.2" y1="726.5" y2="730.5" stroke="#000" shape-rendering="crispEdges"/>
<line x1="773.9" x2="773.9" y1="726.5" y2="730.5" stroke="#000" shape-rendering="crispEdges"/>
<line x1="791.7" x2="791.7" y1="726.5" y2="730.5" stroke="#000" shape-rendering="crispEdges"/>
<line x1="809.4" x2="809.4" y1="726.5" y2="730.5" stroke="#000" shape-rendering="crispEdges"/>
<line x1="827.1" x2="827.1" y1="726.5" y2="730.5" stroke="#000" shape-rendering="crispEdges"/>
<line x1="844.8" x2="844.8" y1="726.5" y2="730.5" stroke="#000" shape-rendering="crispEdges"/>
<line x1="862.5" x2="862.5" y1="726.5" y2="730.5" stroke="#000" shape-rendering="crispEdges"/>
<line x1="880.2" x2="880.2" y1="726.5" y2="730.5" stroke="#000" shape-rendering="crispEdges"/>
<line x1="897.9" x2="897.9" y1="726.5" y2="730.5" stroke="#000" shape-rendering="crispEdges"/>
<line x1="915.6" x2="915.6" y1="726.5" y2="730.5" stroke="#000" shape-rendering="crispEdges"/>
<line x1="933.3" x2="933.3" y1="726.5" y2="730.5" stroke="#000" shape-rendering="crispEdges"/>
<line x1="951.0" x2="951.0" y1="726.5" y2="730.5" stroke="#000" shape-rendering="crispEdges"/>
<line x1="968.8" x2="968.8" y1="726.5" y2="730.5" stroke="#000" shape-rendering="crispEdges"/>
<line x1="986.5" x2="986.5" y1="726.5" y2="730.5" stroke="#000" shape-rendering="crispEdges"/>
<line x1="1004.2" x2="1004.2" y1="726.5" y2="730.5" stroke="#000" shape-rendering="crispEdges"/>
<line x1="1021.9" x2="1021.9" y1="726.5" y2="730.5" stroke="#000" shape-rendering="crispEdges"/>
<line x1="1039.6" x2="1039.6" y1="726.5" y2="730.5" stroke="#000" shape-rendering="crispEdges"/>
<line x1="1057.3" x2="1057.3" y1="726.5" y2="730.5" stroke="#000" shape-rendering="crispEdges"/>
<line x1="1075.0" x2="1075.0" y1="726.5" y2="730.5" stroke="#000" shape-rendering="crispEdges"/>
<line x1="1092.7" x2="1092.7" y1="726.5" y2="730.5" stroke="#000" shape-rendering="crispEdges"/>
<line x1="1110.4" x2="1110.4" y1="726.5" y2="730.5" stroke="#000" shape-rendering="crispEdges"/>
<line x1="1128.2" x2="1128.2" y1="726.5" y2="730.5" stroke="#000" shape-rendering="crispEdges"/>
<line x1="1145.9" x2="1145.9" y1="726.5" y2="730.5" stroke="#000" shape-rendering="crispEdges"/>
<line x1="1163.6" x2="1163.6" y1="726.5" y2="730.5" stroke="#000" shape-rendering="crispEdges"/>
<line x1="1181.3" x2="1181.3" y1="726.5" y2="730.5" stroke="#000" shape-rendering="crispEdges"/>
<line x1="1199.0" x2="1199.0" y1="726.5" y2="730.5" stroke="#000" shape-rendering="crispEdges"/>
<text x="55.7" y="742.7" font-size="10" textLength="26.2" lengthAdjust="spacing">3.25</text>
<text x="144.3" y="742.7" font-size="10" textLength="26.2" lengthAdjust="spacing">3.50</text>
<text x="232.8" y="742.7" font-size="10" textLength="26.2" lengthAdjust="spacing">3.75</text>
<text x="321.4" y="742.7" font-size="10" textLength="26.2" lengthAdjust="spacing">4.00</text>
<text x="409.9" y="742.7" font-size="10" textLength="26.2" lengthAdjust="spacing">4.25</text>
<text x="498.5" y="742.7" font-size="10" textLength="26.2" lengthAdjust="spacing">4.50</text>
<text x="587.0" y="742.7" font-size="10" textLength="26.2" lengthAdjust="spacing">4.75</text>
<text x="675.6" y="742.7" font-size="10" textLength="26.2" lengthAdjust="spacing">5.00</text>
<text x="764.1" y="742.7" font-size="10" textLength="26.2" lengthAdjust="spacing">5.25</text>
<text x="852.7" y="742.7" font-size="10" textLength="26.2" lengthAdjust="spacing">5.50</text>
<text x="941.3" y="742.7" font-size="10" textLength="26.2" lengthAdjust="spacing">5.75</text>
<text x="1029.8" y="742.7" font-size="10" textLength="26.2" lengthAdjust="spacing">6.00</text>
<text x="1118.4" y="742.7" font-size="10" textLength="26.2" lengthAdjust="spacing">6.25</text>
<text x="548.6" y="764.6" font-size="12" text-anchor="start" textLength="182.8" lengthAdjust="spacingAndGlyphs">Engine Speed (RPM x1000)</text>
<path d="M157.5 196.2C160.8 196.0 172.8 194.9 177.5 195.0C182.2 195.1 183.2 196.8 186.0 196.8C188.8 196.8 190.8 195.9 194.0 195.0C197.2 194.1 200.5 192.0 205.0 191.2C209.5 190.5 216.4 191.3 221.0 190.8C225.6 190.2 229.2 188.7 232.5 188.0C235.8 187.3 238.1 186.7 241.0 186.8C243.9 186.8 244.3 187.9 250.0 188.2C255.7 188.6 268.3 188.3 275.0 188.8C281.7 189.2 284.2 190.0 290.0 190.8C295.8 191.5 305.0 193.0 310.0 193.2C315.0 193.5 315.8 192.3 320.0 192.5C324.2 192.7 330.8 194.4 335.0 194.5C339.2 194.6 341.2 194.0 345.0 193.2C348.8 192.5 353.3 190.8 357.5 190.0C361.7 189.2 365.8 188.5 370.0 188.2C374.2 188.0 377.5 187.7 382.5 188.8C387.5 189.8 395.6 193.2 400.0 194.5C404.4 195.8 406.1 196.8 409.0 196.8C411.9 196.8 414.0 195.6 417.5 194.5C421.0 193.4 426.7 190.8 430.0 190.0C433.3 189.2 434.2 189.3 437.5 189.5C440.8 189.7 446.2 190.8 450.0 191.2C453.8 191.8 454.6 192.3 460.0 192.5C465.4 192.7 476.2 193.0 482.5 192.5C488.8 192.0 493.3 190.0 497.5 189.2C501.7 188.5 503.3 188.5 507.5 188.2C511.7 188.0 517.5 188.3 522.5 188.0C527.5 187.7 532.5 186.8 537.5 186.2C542.5 185.8 546.2 185.2 552.5 185.0C558.8 184.8 570.4 184.8 575.0 185.0C579.6 185.2 577.9 185.0 580.0 186.2C582.1 187.5 585.0 190.6 587.5 192.5C590.0 194.4 592.8 196.4 595.0 197.5C597.2 198.6 596.0 199.0 601.0 199.2C606.0 199.5 619.3 199.5 625.0 199.2C630.7 199.0 632.1 198.2 635.0 198.0C637.9 197.8 638.8 197.5 642.5 198.2C646.2 199.0 653.8 201.7 657.5 202.5C661.2 203.3 661.7 202.8 665.0 203.2C668.3 203.8 674.2 205.3 677.5 205.5C680.8 205.7 681.7 205.0 685.0 204.5C688.3 204.0 693.8 202.8 697.5 202.5C701.2 202.2 704.6 202.2 707.5 202.5C710.4 202.8 712.2 203.5 715.0 204.2C717.8 205.0 720.2 206.6 724.0 207.0C727.8 207.4 733.6 206.5 737.5 206.8C741.4 207.0 744.2 207.9 747.5 208.8C750.8 209.6 754.6 211.5 757.5 212.0C760.4 212.5 762.5 212.2 765.0 212.0C767.5 211.8 769.6 210.7 772.5 210.8C775.4 210.8 779.2 211.9 782.5 212.5C785.8 213.1 786.7 213.9 792.5 214.2C798.3 214.6 812.2 214.2 817.5 214.5C822.8 214.8 821.5 215.1 824.0 216.2C826.5 217.4 829.8 220.0 832.5 221.2C835.2 222.5 837.5 223.4 840.0 223.8C842.5 224.1 844.2 223.7 847.5 223.2C850.8 222.8 856.7 221.3 860.0 221.2C863.3 221.2 864.6 222.1 867.5 223.0C870.4 223.9 872.9 225.5 877.5 226.8C882.1 228.0 890.8 229.9 895.0 230.5C899.2 231.1 899.6 230.7 902.5 230.5C905.4 230.3 909.2 229.3 912.5 229.2C915.8 229.2 918.8 229.5 922.5 230.0C926.2 230.5 931.2 231.2 935.0 232.0C938.8 232.8 941.2 234.2 945.0 235.0C948.8 235.8 953.3 235.6 957.5 236.8C961.7 237.9 966.2 240.6 970.0 242.0C973.8 243.4 976.7 243.8 980.0 245.0C983.3 246.2 986.7 248.2 990.0 249.2C993.3 250.3 997.4 250.9 1000.0 251.3C1002.6 251.7 1003.9 251.2 1005.6 251.9C1007.3 252.6 1008.4 254.6 1010.3 255.6C1012.2 256.6 1014.6 257.6 1017.0 258.0C1019.4 258.4 1021.9 258.3 1024.4 258.0C1026.9 257.7 1029.7 256.2 1032.0 256.2C1034.3 256.2 1036.4 256.8 1038.4 257.9C1040.4 259.0 1042.3 261.6 1044.0 263.1C1045.7 264.6 1046.8 265.8 1048.8 266.9C1050.8 268.0 1053.5 268.9 1056.0 269.7C1058.5 270.5 1061.2 271.0 1063.8 271.9C1066.2 272.8 1068.2 274.4 1071.0 275.3C1073.8 276.2 1078.0 277.1 1080.6 277.5C1083.2 277.9 1085.6 277.5 1086.6 277.5" fill="none" stroke="#8080C4" stroke-width="1.05" />
<path d="M157.5 366.2C159.6 365.5 165.6 363.2 170.0 362.0C174.4 360.8 180.0 359.9 184.0 358.8C188.0 357.6 190.5 356.5 194.0 355.0C197.5 353.5 200.7 351.5 205.0 350.0C209.3 348.5 215.4 347.5 220.0 345.8C224.6 344.0 228.8 340.9 232.5 339.2C236.2 337.6 238.3 336.8 242.5 335.8C246.7 334.8 252.5 334.5 257.5 333.2C262.5 332.0 267.9 329.1 272.5 328.0C277.1 326.9 281.2 327.3 285.0 326.8C288.8 326.2 291.0 325.2 295.0 324.5C299.0 323.8 305.2 323.5 309.0 322.5C312.8 321.5 314.0 319.7 317.5 318.8C321.0 317.8 325.8 317.8 330.0 316.8C334.2 315.7 338.3 314.1 342.5 312.5C346.7 310.9 349.6 309.2 355.0 307.0C360.4 304.8 369.6 301.2 375.0 299.5C380.4 297.8 383.8 297.2 387.5 297.0C391.2 296.8 393.9 298.3 397.5 298.2C401.1 298.2 405.2 297.9 409.0 296.8C412.8 295.6 416.3 293.2 420.0 291.2C423.7 289.3 427.7 286.5 431.0 285.0C434.3 283.5 436.4 283.1 440.0 282.5C443.6 281.9 448.8 281.9 452.5 281.2C456.2 280.6 458.1 279.8 462.5 278.8C466.9 277.7 473.2 277.1 479.0 275.0C484.8 272.9 491.9 268.6 497.5 266.2C503.1 263.9 508.9 261.8 512.5 260.8C516.1 259.7 515.2 261.0 519.0 260.0C522.8 259.0 529.8 256.4 535.0 254.5C540.2 252.6 545.0 250.5 550.0 248.8C555.0 247.0 560.8 245.0 565.0 243.8C569.2 242.5 572.1 241.7 575.0 241.2C577.9 240.8 580.0 240.8 582.5 241.2C585.0 241.8 587.8 243.3 590.0 244.2C592.2 245.2 593.9 246.3 596.0 246.8C598.1 247.2 599.8 247.2 602.5 246.8C605.2 246.2 608.8 244.8 612.5 243.8C616.2 242.7 621.2 241.8 625.0 240.5C628.8 239.2 632.1 237.3 635.0 236.2C637.9 235.2 639.2 234.6 642.5 234.2C645.8 233.9 650.8 234.5 655.0 234.2C659.2 234.0 663.5 233.0 667.5 232.5C671.5 232.0 674.8 232.5 679.0 231.2C683.2 230.0 688.2 226.8 692.5 225.0C696.8 223.2 699.6 221.2 705.0 220.5C710.4 219.8 720.4 220.8 725.0 220.5C729.6 220.2 729.8 219.6 732.5 218.8C735.2 217.9 738.5 216.1 741.0 215.5C743.5 214.9 745.8 214.9 747.5 215.0C749.2 215.1 749.1 216.0 751.0 216.2C752.9 216.5 755.4 217.2 759.0 216.2C762.6 215.3 769.0 211.9 772.5 210.8C776.0 209.6 776.9 209.8 780.0 209.5C783.1 209.2 787.2 209.8 791.0 209.2C794.8 208.7 798.9 207.3 802.5 206.2C806.1 205.2 809.4 203.6 812.5 203.0C815.6 202.4 817.7 202.0 821.0 202.5C824.3 203.0 829.3 205.1 832.5 205.8C835.7 206.4 837.1 207.0 840.0 206.5C842.9 206.0 846.5 204.4 850.0 203.0C853.5 201.6 857.7 198.8 861.0 198.2C864.3 197.7 865.2 199.3 870.0 199.5C874.8 199.7 884.6 199.9 890.0 199.5C895.4 199.1 898.8 198.0 902.5 197.0C906.2 196.0 909.2 194.1 912.5 193.2C915.8 192.4 918.8 192.2 922.5 191.8C926.2 191.3 932.1 190.6 935.0 190.5C937.9 190.4 937.5 191.1 940.0 191.2C942.5 191.4 947.1 191.4 950.0 191.2C952.9 191.1 954.2 190.0 957.5 190.2C960.8 190.5 966.2 192.4 970.0 193.0C973.8 193.6 977.1 193.3 980.0 193.8C982.9 194.2 984.2 195.3 987.5 195.5C990.8 195.7 996.8 195.0 1000.0 195.0C1003.2 195.0 1004.2 194.9 1006.5 195.6C1008.8 196.3 1011.3 198.9 1014.0 199.4C1016.7 199.9 1019.5 199.4 1022.5 198.4C1025.5 197.4 1029.3 194.2 1032.0 193.4C1034.7 192.6 1036.6 193.0 1038.4 193.8C1040.2 194.5 1041.0 196.6 1043.0 198.0C1045.0 199.4 1048.4 201.3 1050.6 202.2C1052.8 203.1 1053.8 203.2 1056.0 203.5C1058.2 203.8 1060.9 203.2 1063.8 203.7C1066.6 204.2 1070.5 206.0 1073.0 206.3C1075.5 206.6 1076.5 205.7 1078.8 205.5C1081.0 205.3 1085.3 205.4 1086.6 205.4" fill="none" stroke="#0C0C84" stroke-width="1.15" />
<path d="M153.8 451.8C154.8 452.0 157.3 451.7 160.0 453.0C162.7 454.3 167.1 457.9 170.0 459.5C172.9 461.1 175.2 462.1 177.5 462.5C179.8 462.9 181.2 463.2 183.8 462.0C186.2 460.8 189.8 457.2 192.5 455.5C195.2 453.8 197.8 452.6 200.0 452.0C202.2 451.4 198.9 452.0 206.0 452.0C213.1 452.0 235.6 452.5 242.5 452.0C249.4 451.5 245.0 450.5 247.5 448.8C250.0 447.0 253.8 443.4 257.5 441.2C261.2 439.1 266.9 436.7 270.0 435.8C273.1 434.8 273.9 434.6 276.0 435.5C278.1 436.4 280.4 438.2 282.5 441.2C284.6 444.3 286.7 448.1 288.8 453.8C290.8 459.4 293.0 468.8 295.0 475.0C297.0 481.2 299.2 487.7 301.0 491.2C302.8 494.8 304.5 495.3 306.0 496.2C307.5 497.2 308.5 497.4 310.0 497.0C311.5 496.6 312.9 495.5 315.0 493.8C317.1 492.0 320.0 488.1 322.5 486.2C325.0 484.4 327.5 483.3 330.0 482.5C332.5 481.7 334.6 481.5 337.5 481.2C340.4 481.0 344.6 481.0 347.5 481.2C350.4 481.5 352.8 482.5 355.0 482.5C357.2 482.5 358.5 482.4 361.0 481.2C363.5 480.1 367.2 478.5 370.0 475.8C372.8 473.0 375.0 468.1 377.5 465.0C380.0 461.9 382.9 458.5 385.0 457.0C387.1 455.5 387.9 455.8 390.0 456.2C392.1 456.8 395.2 459.0 397.5 460.0C399.8 461.0 401.9 462.3 404.0 462.5C406.1 462.7 407.3 462.6 410.0 461.2C412.7 459.9 417.1 456.2 420.0 454.5C422.9 452.8 425.2 451.8 427.5 451.2C429.8 450.7 431.9 450.6 434.0 451.2C436.1 451.9 437.3 453.1 440.0 455.0C442.7 456.9 447.5 461.0 450.0 462.5C452.5 464.0 452.7 464.7 455.0 464.2C457.3 463.8 460.8 462.0 463.8 460.0C466.7 458.0 470.0 454.0 472.5 452.5C475.0 451.0 476.5 451.0 478.8 451.2C481.0 451.5 483.3 452.0 486.2 453.8C489.2 455.5 492.7 459.8 496.2 462.0C499.8 464.2 503.5 466.2 507.5 467.0C511.5 467.8 516.2 467.6 520.0 467.0C523.8 466.4 526.9 465.2 530.0 463.2C533.1 461.2 536.0 458.0 538.8 455.0C541.5 452.0 544.0 447.6 546.2 445.0C548.5 442.4 550.2 440.6 552.5 439.2C554.8 437.9 553.1 437.4 560.0 437.0C566.9 436.6 587.1 436.3 593.8 437.0C600.4 437.7 597.9 440.0 600.0 441.2C602.1 442.5 604.2 444.0 606.2 444.2C608.3 444.5 610.2 444.1 612.5 442.5C614.8 440.9 617.9 436.2 620.0 434.5C622.1 432.8 623.5 432.2 625.0 432.5C626.5 432.8 627.1 433.3 628.8 436.2C630.4 439.2 633.3 445.6 635.0 450.0C636.7 454.4 637.1 458.3 638.8 462.5C640.4 466.7 642.3 471.0 645.0 475.0C647.7 479.0 652.5 482.5 655.0 486.2C657.5 490.0 658.3 493.1 660.0 497.5C661.7 501.9 663.3 507.1 665.0 512.5C666.7 517.9 668.5 525.8 670.0 530.0C671.5 534.2 672.4 535.9 673.8 537.5C675.1 539.1 676.5 539.6 678.0 539.5C679.5 539.4 680.5 538.8 682.5 537.0C684.5 535.2 687.5 530.6 690.0 528.8C692.5 526.9 694.8 526.2 697.5 525.8C700.2 525.3 703.3 525.1 706.2 526.2C709.2 527.4 712.1 530.5 715.0 532.5C717.9 534.5 721.5 537.3 723.8 538.2C726.0 539.2 726.7 539.0 728.8 538.2C730.8 537.5 734.0 534.7 736.2 533.8C738.5 532.8 740.0 531.9 742.5 532.5C745.0 533.1 749.0 536.7 751.2 537.5C753.5 538.3 754.0 538.6 756.2 537.5C758.5 536.4 762.3 532.6 765.0 530.8C767.7 528.9 767.5 527.0 772.5 526.2C777.5 525.5 790.2 526.0 795.0 526.2C799.8 526.5 799.2 527.5 801.2 528.0C803.3 528.5 805.4 529.8 807.5 529.2C809.6 528.8 811.5 527.0 813.8 525.0C816.0 523.0 819.2 519.2 821.2 517.5C823.3 515.8 824.6 515.0 826.2 515.0C827.9 515.0 829.2 516.0 831.2 517.5C833.3 519.0 836.7 522.3 838.8 523.8C840.8 525.2 838.5 525.8 843.8 526.2C849.0 526.7 864.6 526.7 870.0 526.2C875.4 525.8 874.2 525.4 876.2 523.8C878.3 522.1 880.2 519.6 882.5 516.2C884.8 512.9 887.7 506.5 890.0 503.8C892.3 501.0 894.2 500.2 896.2 500.0C898.3 499.8 900.2 501.3 902.5 502.5C904.8 503.7 907.7 506.6 910.0 507.0C912.3 507.4 914.2 505.8 916.2 505.0C918.3 504.2 920.6 502.1 922.5 502.5C924.4 502.9 925.8 504.6 927.5 507.5C929.2 510.4 930.8 516.0 932.5 520.0C934.2 524.0 935.9 528.8 937.5 531.2C939.1 533.7 940.5 534.5 942.0 534.5C943.5 534.5 944.9 533.2 946.2 531.2C947.6 529.2 948.3 525.3 950.0 522.5C951.7 519.7 954.6 516.0 956.2 514.2C957.9 512.5 954.8 512.2 960.0 511.8C965.2 511.3 981.9 511.2 987.5 511.8C993.1 512.3 991.7 513.5 993.8 515.0C995.8 516.5 998.1 519.2 1000.0 520.5C1001.9 521.8 1003.3 522.8 1005.0 522.5C1006.7 522.2 1008.1 521.0 1010.0 518.8C1011.9 516.5 1014.4 511.0 1016.2 508.8C1018.1 506.5 1019.4 505.3 1021.2 505.0C1023.1 504.7 1025.6 506.3 1027.5 507.0C1029.4 507.7 1030.9 509.4 1032.5 509.4C1034.1 509.4 1035.8 507.9 1037.0 506.9C1038.2 505.8 1038.3 504.6 1039.4 503.1C1040.5 501.6 1042.2 499.2 1043.8 498.1C1045.3 497.0 1046.7 496.9 1048.8 496.6C1050.8 496.3 1054.5 496.5 1056.2 496.2C1058.0 496.0 1058.4 495.4 1059.4 495.2C1060.4 495.1 1061.6 494.8 1062.5 495.6C1063.4 496.4 1064.2 498.3 1065.0 500.0C1065.8 501.7 1066.7 502.9 1067.5 505.6C1068.3 508.3 1069.0 512.4 1070.0 516.2C1071.0 520.1 1072.5 524.4 1073.8 528.8C1075.0 533.1 1076.4 538.8 1077.5 542.5C1078.6 546.2 1079.6 549.0 1080.6 551.2C1081.6 553.5 1082.7 555.0 1083.8 556.0C1084.8 557.0 1086.4 557.2 1086.9 557.5" fill="none" stroke="#0C0C84" stroke-width="1.15" />
<path d="M153.8 673.0C155.2 673.7 159.4 675.8 162.5 677.0C165.6 678.2 168.8 679.6 172.5 680.5C176.2 681.4 180.4 681.8 185.0 682.5C189.6 683.2 194.2 684.4 200.0 685.0C205.8 685.6 213.3 685.9 220.0 686.2C226.7 686.6 233.8 686.7 240.0 687.0C246.2 687.3 251.2 687.9 257.5 688.2C263.8 688.6 270.4 688.8 277.5 689.0C284.6 689.2 294.2 689.1 300.0 689.5C305.8 689.9 308.3 690.6 312.5 691.2C316.7 691.9 321.2 692.8 325.0 693.2C328.8 693.8 330.8 694.2 335.0 694.2C339.2 694.3 345.8 694.0 350.0 693.8C354.2 693.5 355.8 692.8 360.0 692.5C364.2 692.2 369.6 691.8 375.0 691.8C380.4 691.8 386.7 692.0 392.5 692.5C398.3 693.0 405.0 694.2 410.0 695.0C415.0 695.8 418.3 696.8 422.5 697.5C426.7 698.2 430.4 698.9 435.0 699.2C439.6 699.6 444.2 699.9 450.0 699.4C455.8 698.9 463.3 697.1 470.0 696.2C476.7 695.4 482.9 694.9 490.0 694.5C497.1 694.1 501.2 693.8 512.5 693.8C523.8 693.7 547.9 693.8 557.5 694.2C567.1 694.8 565.8 696.2 570.0 696.8C574.2 697.3 578.3 697.7 582.5 697.5C586.7 697.3 591.2 696.3 595.0 695.8C598.8 695.2 599.6 694.2 605.0 694.0C610.4 693.8 621.2 693.8 627.5 694.2C633.8 694.8 634.6 696.5 642.5 697.0C650.4 697.5 667.9 697.6 675.0 697.5C682.1 697.4 676.2 696.5 685.0 696.2C693.8 696.0 716.7 696.8 727.5 696.2C738.3 695.8 742.9 694.0 750.0 693.2C757.1 692.5 763.3 691.7 770.0 691.5C776.7 691.3 783.8 691.4 790.0 692.0C796.2 692.6 800.0 694.7 807.5 695.2C815.0 695.8 826.2 695.7 835.0 695.2C843.8 694.8 852.5 693.0 860.0 692.5C867.5 692.0 872.1 691.5 880.0 692.0C887.9 692.5 896.7 694.7 907.5 695.2C918.3 695.8 936.7 695.0 945.0 695.2C953.3 695.5 952.5 696.7 957.5 696.5C962.5 696.3 968.3 694.6 975.0 694.2C981.7 693.9 991.2 693.9 997.5 694.2C1003.8 694.6 1006.7 696.1 1012.5 696.5C1018.3 696.9 1027.9 696.8 1032.5 696.5C1037.1 696.2 1037.1 695.2 1040.0 695.0C1042.9 694.8 1048.3 695.2 1050.0 695.2" fill="none" stroke="#0C0C84" stroke-width="1.15" />
<rect x="285.5" y="133.5" width="15" height="15" fill="#0000FF" stroke="#000060"/>
<rect x="293.0" y="134.0" width="7" height="14" fill="#8080FF"/>
<text x="303.4" y="143.6" font-size="11" text-anchor="start" textLength="237.0" lengthAdjust="spacingAndGlyphs">RunFile_013.drf Max Power = 397.52</text>
<text x="543.2" y="143.6" font-size="11" text-anchor="start" textLength="135.5" lengthAdjust="spacingAndGlyphs">Max Torque = 401.31</text>
<rect x="331.5" y="404.5" width="15" height="15" fill="#0000FF" stroke="#000060"/>
<rect x="339.0" y="405.0" width="7" height="14" fill="#8080FF"/>
<text x="349.5" y="414.8" font-size="11" text-anchor="start" textLength="237.5" lengthAdjust="spacingAndGlyphs">RunFile_013.drf Max *SPARK = 17.33</text>
<rect x="1049" y="705" width="60" height="15" fill="#fff"/>
<text x="1053.0" y="715.6" font-size="11" text-anchor="start" textLength="49.4" lengthAdjust="spacingAndGlyphs">X = 6.27</text>
<text transform="translate(28.0 251.5) rotate(-90)" font-size="12" text-anchor="middle" textLength="78.0" lengthAdjust="spacingAndGlyphs">Power (hp)</text>
<text transform="translate(28.0 481.5) rotate(-90)" font-size="12" text-anchor="middle" textLength="46.0" lengthAdjust="spacingAndGlyphs">*SPARK</text>
<text transform="translate(28.0 654.0) rotate(-90)" font-size="12" text-anchor="middle" textLength="58.0" lengthAdjust="spacingAndGlyphs">Air/Fuel</text>
<text transform="translate(1251.0 252.0) rotate(90)" font-size="12" text-anchor="middle" textLength="104.0" lengthAdjust="spacingAndGlyphs">Torque (ft-lbs)</text>
<rect x="1244.5" y="396.5" width="21" height="172" fill="none" stroke="#808080"/>
<path d="M1265.5 396 V568.5 H1244" fill="none" stroke="#fff"/>
<text transform="translate(1249.6 482.0) rotate(90)" font-size="12" text-anchor="middle" textLength="34.0" lengthAdjust="spacingAndGlyphs">None</text>
<text transform="translate(1249.6 654.0) rotate(90)" font-size="12" text-anchor="middle" textLength="34.0" lengthAdjust="spacingAndGlyphs">None</text>
</svg>
<div id="status" class="abs"></div>
<div id="ctx" class="abs">
<div style="top:2px"><u>N</u>one</div>
<div style="top:19px">F<u>o</u>rce</div>
<div style="top:36px"><u>P</u>ower</div>
<div style="top:53px">To<u>r</u>que</div>
<div style="top:70px">Spee<u>d</u></div>
<div style="top:87px"><u>C</u>hannel String Not Found</div>
<div style="top:104px">Engine Speed</div>
<div style="top:121px">Ge<u>a</u>r Ratio</div>
<div style="top:138px">A<u>i</u>r/Fuel</div>
<div style="top:155px">Cell Tor<u>q</u>ue</div>
<div style="top:172px">Cell Torq<u>u</u>e - 2</div>
<div class="sel" style="top:189px"><i>*</i><u>B</u>oost</div>
<div class="st" style="top:206px"><i>*</i><u>E</u>CT</div>
<div class="st" style="top:223px"><i>*</i>FPDC</div>
<div class="st" style="top:240px"><i>*</i>FRP</div>
<div class="st" style="top:257px"><i>*</i>IAT</div>
<div class="st" style="top:274px"><i>*</i><u>L</u>OAD</div>
<div class="st" style="top:291px"><i>*</i>LONGFT<u>1</u></div>
<div class="st" style="top:308px"><i>*</i>LONGFT<u>2</u></div>
<div class="st" style="top:325px"><i>*</i><u>M</u>AF</div>
<div class="st" style="top:342px"><i>*</i>MAF<u>_V</u></div>
<div class="st" style="top:359px"><i>*</i>S<u>H</u>RTFT1</div>
<div class="st" style="top:376px"><i>*</i><u>S</u>HRTFT2</div>
<div class="st" style="top:393px"><i>*</i>SPAR<u>K</u></div>
<div class="st" style="top:410px"><i>*</i>VP<u>W</u>R</div>
<div class="st" style="top:427px"><i>*</i><u>T</u>CCDC</div>
<div class="st" style="top:444px"><i>*</i>T<u>F</u>T</div>
</div>
<svg class="abs" style="left:1205px;top:526px" width="14" height="22" viewBox="0 0 14 22"><path d="M1.5 1 V16.8 L5.2 13.4 L8 19.8 L10.2 18.8 L7.5 12.3 H12.2 Z" fill="#fff" stroke="#000" stroke-width="1"/></svg>
</div>
</body></html>
